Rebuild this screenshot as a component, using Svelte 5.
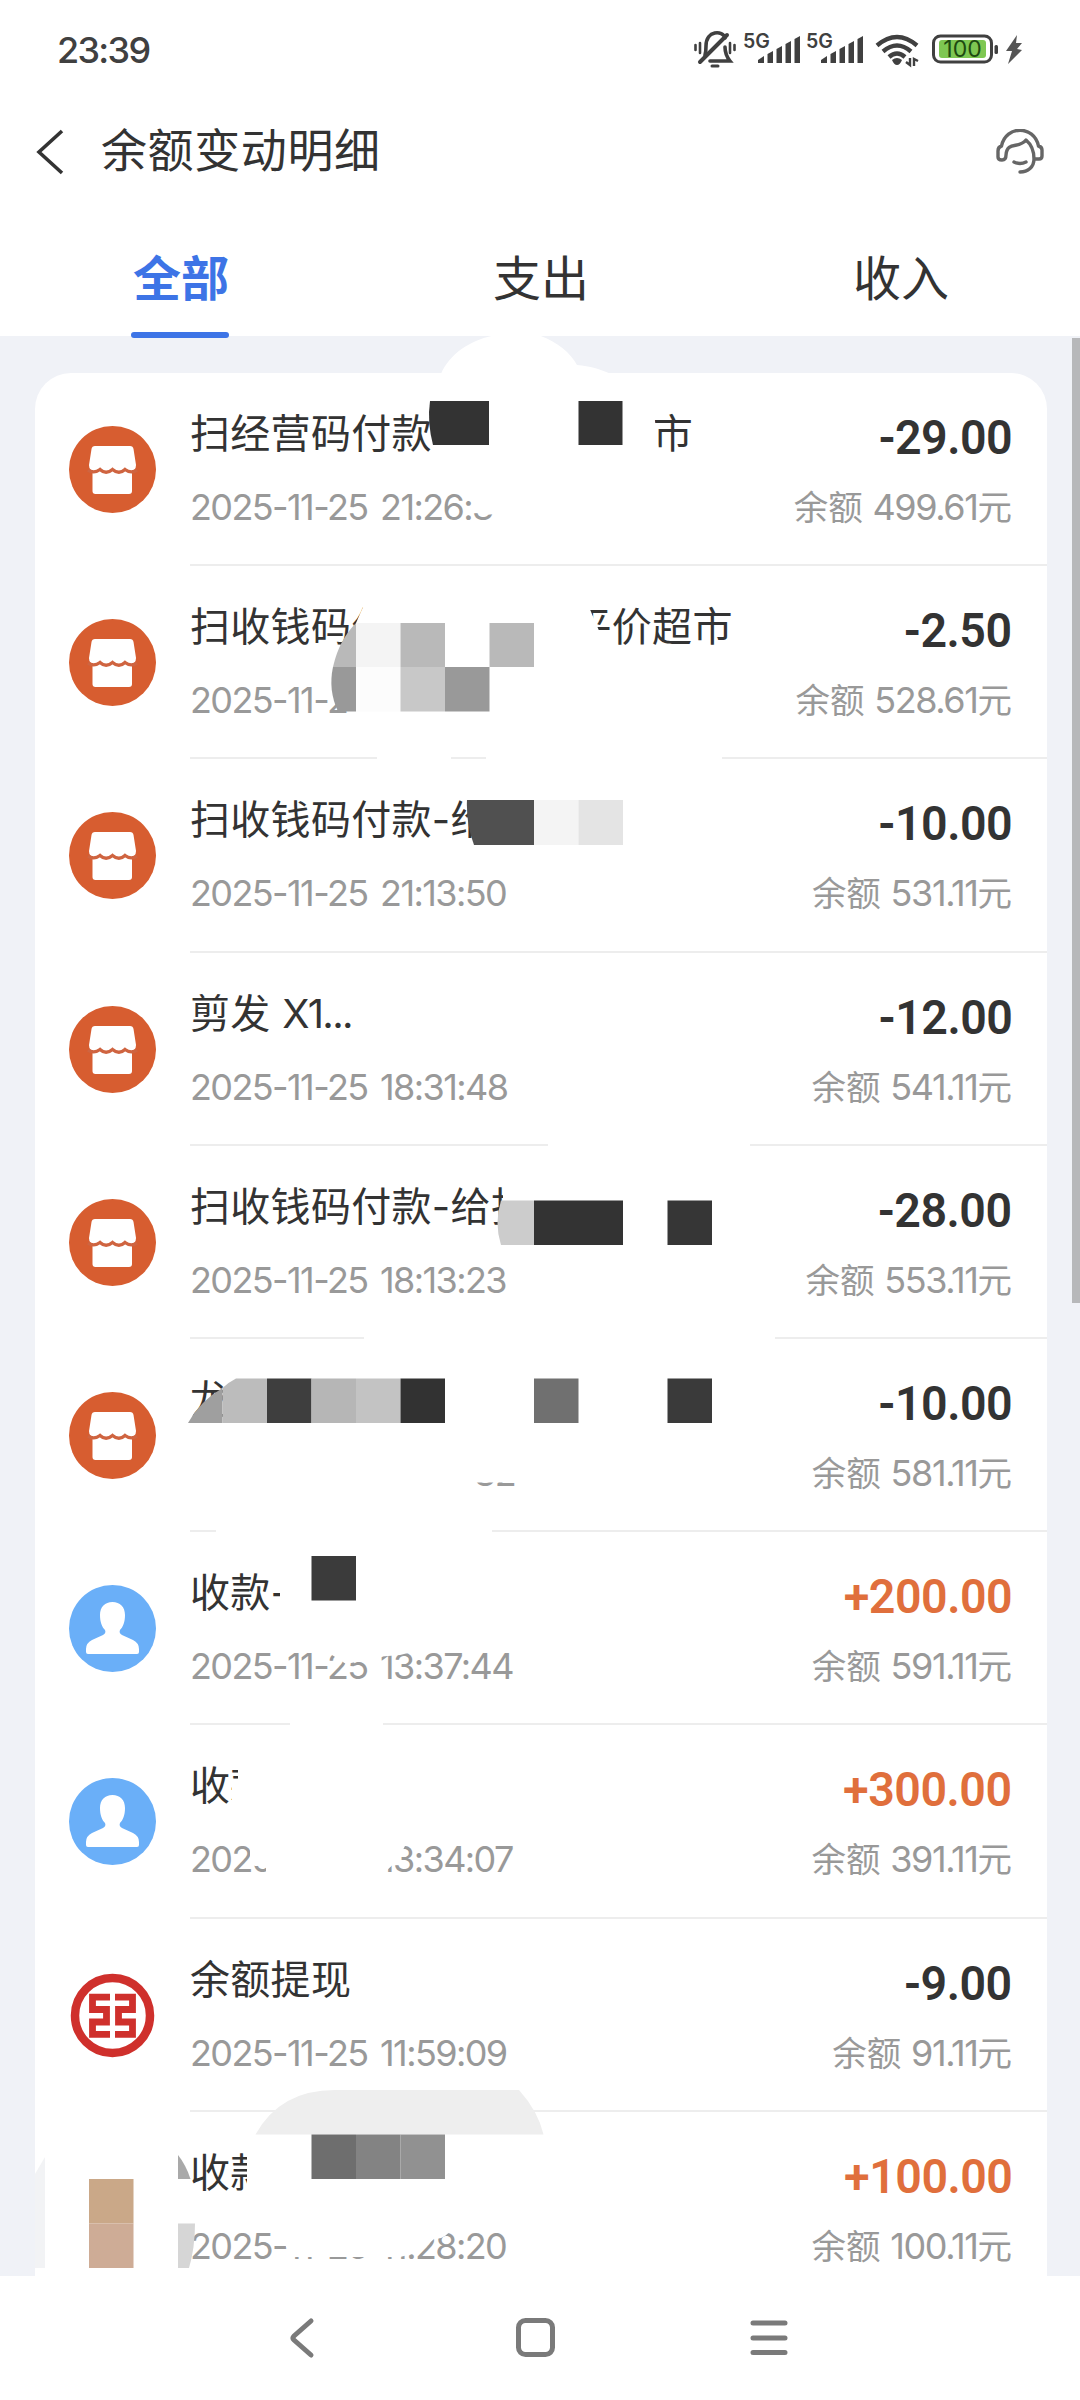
<script>
	const tabs = ['全部', '支出', '收入']
	let active = 0

	// gap: free space before the tail of a title, lead: space before a time
	const records = [
		{ icon: 'shop', title: '扫经营码付款', gap: 221, tail: '市', time: '2025-11-25 21:26:3', amount: '-29.00', balance: '499.61' },
		{ icon: 'shop', title: '扫收钱码付', gap: 180, tail: '平价超市', time: '2025-11-2', amount: '-2.50', balance: '528.61' },
		{ icon: 'shop', title: '扫收钱码付款-给', time: '2025-11-25 21:13:50', amount: '-10.00', balance: '531.11' },
		{ icon: 'shop', title: '剪发 ', count: 'X1...', time: '2025-11-25 18:31:48', amount: '-12.00', balance: '541.11' },
		{ icon: 'shop', title: '扫收钱码付款-给扫', time: '2025-11-25 18:13:23', amount: '-28.00', balance: '553.11' },
		{ icon: 'shop', title: '龙', lead: 284, time: '32', amount: '-10.00', balance: '581.11' },
		{ icon: 'user', title: '收款-', time: '2025-11-25 13:37:44', amount: '+200.00', balance: '591.11' },
		{ icon: 'user', title: '收款', time: '2025-11-25 13:34:07', amount: '+300.00', balance: '391.11' },
		{ icon: 'bank', title: '余额提现', time: '2025-11-25 11:59:09', amount: '-9.00', balance: '91.11' },
		{ icon: '', title: '收款', time: '2025-11-25 11:28:20', amount: '+100.00', balance: '100.11' }
	]

	// wiped areas
	const wipes = [
		'M441 374C450 352 475 338 497 335H538C556 341 570 352 577 365C590 366 600 369 611 374Z',
		'M489 398H579V446H489ZM623 398H652L660 460H623Z',
		'M472 488H500V512Q486 518 477 511L472 502Z',
		'M367 598L356 623H410V598Z',
		'M329 684H342V706L336 700L329 704Z',
		'M565 600H586L600 633V634H613V660H565Z',
		'M377 756H451V761H377ZM486 756H722V761H486Z',
		'M470 790H500V801H470ZM474 845H500V852H474Z',
		'M548 1142H750V1149H548Z',
		'M503 1180H540V1201H503Z',
		'M364 1335H775V1342H364Z',
		'M236 1370H240V1379H236ZM185 1423H240V1430H185ZM185 1410H196L188 1424H185Z',
		'M470 1450H515V1482.5H470Z',
		'M216 1528H492V1535H216Z',
		'M280 1560H311V1600H280Z',
		'M332 1640V1655L346 1664L356 1662L376 1657L400 1655L412 1652V1640Z',
		'M290 1721H383V1728H290Z',
		'M238 1765H280V1814H232V1781H238Z',
		'M250 1835V1864Q256 1868 266 1864V1885H385V1872Q398 1862 408 1840V1835Z',
		'M247 2140H275V2200H247Z',
		'M285 2225V2245L293 2257H400L420 2252L434 2239Q445 2240 452 2228V2225Z'
	]

	const tiles = [
		['M430 401H489V445H433Q427 422 430 401Z', '#333'],
		['M578.5 401H622.5V445H578.5Z', '#333'],
		['M356 623V667H333Q339 640 356 623Z', '#b9b9b9'],
		['M333 667H356V711.5H338Q328 690 333 667Z', '#999'],
		['M356 623H400.5V667H356Z', '#f4f4f4'],
		['M356 667H400.5V711.5H356Z', '#fcfcfc'],
		['M400.5 623H445V667H400.5ZM489.5 623H534V667H489.5Z', '#b9b9b9'],
		['M400.5 667H445V711.5H400.5Z', '#c8c8c8'],
		['M445 667H489.5V711.5H445Z', '#999'],
		['M467 800H534V845H474Q466 824 467 800Z', '#505050'],
		['M534 800H578.5V845H534Z', '#f4f4f4'],
		['M578.5 800H623V845H578.5Z', '#e4e4e4'],
		['M501 1200.5H534V1245H501Q494 1223 501 1200.5Z', '#ccc'],
		['M534 1200.5H623V1245H534Z', '#333'],
		['M667.5 1200.5H712V1245H667.5Z', '#363636'],
		['M222.5 1388V1423H188Q200 1401 222.5 1388Z', '#9f9f9f'],
		['M236 1378.5H267V1423H222.5V1388Q229 1382 236 1378.5Z', '#bcbcbc'],
		['M267 1378.5H311.5V1423H267Z', '#3e3e3e'],
		['M311.5 1378.5H356V1423H311.5Z', '#b6b6b6'],
		['M356 1378.5H400.5V1423H356Z', '#c3c3c3'],
		['M400.5 1378.5H445V1423H400.5Z', '#323232'],
		['M534 1378.5H578.5V1423H534Z', '#707070'],
		['M667.5 1378.5H712V1423H667.5Z', '#3a3a3a'],
		['M311.5 1556H356V1600.5H311.5Z', '#3b3b3b'],
		['M255.5 2134.5Q280 2090 335 2090H519Q538 2111 543.5 2134.5Z', '#eee'],
		['M311.5 2134.5H356V2179H311.5Z', '#6e6e6e'],
		['M356 2134.5H400.5V2179H356Z', '#838383'],
		['M400.5 2134.5H445V2179H400.5Z', '#919191'],
		['M178 2155Q186 2165 190.5 2179H178Z', '#a9a9a9'],
		['M178 2223.5H195Q195 2248 189 2268H178Z', '#d6d6d6'],
		['M89 2179H133.5V2223.5H89Z', '#caa888'],
		['M133.5 2223.5V2268H89V2223.5Z', '#ceac96'],
		['M45 2157L35 2174V2268H45Z', '#f2f3f5']
	]
</script>

<div class="screen">
	<div class="status">
		<span class="clock">23:39</span>
		<svg width="336" height="40" viewBox="692 28 336 40">
			<g fill="none" stroke="#404040" stroke-width="3.6" stroke-linecap="round">
				<path d="M705 55C706 52 706 49 706 46C706 30 723 30 725 38M710 61H730C726 56 725 52 725 47" />
				<path d="M700 62L727 35" stroke-width="4" />
				<path d="M695.5 45V50M700 43V53M730 43V53M734.500 45V50" stroke-width="2.6" />
				<path d="M712 66H718" stroke-width="3" />
			</g>
			<g fill="#404040">
				<text class="net" x="743" y="47.500">5G</text>
				<text class="net" x="806" y="47.500">5G</text>
				{#each [758, 821] as x}
					<path transform="translate({x} 0)" d="M0 63V60L6 56V63ZM9.500 63V54L15 51V63ZM18.500 63V49L24 46V63ZM27.500 63V44L33 41V63ZM36.500 63V39L42 36V63Z" />
				{/each}
				<path d="M892 60Q897 56 902 60Q900 65 897 65Q894 65 892 60Z" />
			</g>
			<g fill="none" stroke="#404040" stroke-width="4.400">
				<path d="M877 45.500Q897 28.500 917 45.500" />
				<path d="M883 51.500Q897 39.500 911 51.500" />
				<path d="M889 57Q897 50 905 57" />
				<path d="M910 58V65L906 62M914 66V59L918 61" stroke-width="2.400" />
			</g>
			<rect x="933.500" y="36" width="58" height="26" rx="7" fill="none" stroke="#404040" stroke-width="3" />
			<rect x="939" y="40" width="47" height="18" rx="3" fill="#7ec752" />
			<text class="level" x="962.500" y="57">100</text>
			<rect x="994.500" y="45" width="3.500" height="9" rx="1.500" fill="#404040" />
			<path d="M1017 35L1006 51H1012L1008 64L1022 50L1017 49L1022 43H1016Z" fill="#555" />
		</svg>
	</div>

	<div class="header">
		<svg width="30" height="48" viewBox="0 0 30 48" fill="none" stroke="#333" stroke-width="3.600"><path d="M27 3L4 24L27 45" /></svg>
		<h1>余额变动明细</h1>
		<svg class="service" width="48" height="46" viewBox="0 0 48 46" fill="none" stroke="#666" stroke-width="3.400" stroke-linecap="round" stroke-linejoin="round">
			<path d="M5.500 17C10 -4 38 -4 42.500 17M5.500 17Q2 18 2 22V28Q2 31 6 31C9 31 10 29 10 26C11 12 23 20 30 11C36 16 38 22 38 30H43Q46 30 46 27V21Q46 18 42.500 17M38 30C38 38 32 43 24 43M18 33Q24 36 30 33" />
		</svg>
	</div>

	<div class="tabs">
		{#each tabs as tab, i}
			<button class:active={active === i} on:click={() => (active = i)}>{tab}</button>
		{/each}
	</div>

	<div class="list">
		<div class="card">
			{#each records as r}
				<div class="row">
					<div class="icon">
						{#if r.icon === 'shop'}
							<svg width="87" height="87" viewBox="0 0 87 87">
								<circle cx="43.500" cy="43.500" r="43.500" fill="#d75d30" />
								<path d="M26 20H61Q64 20 64.500 23L67 39Q67 45 61 45H26Q20 45 20 39L22.500 23Q23 20 26 20Z" fill="#fff" />
								<path d="M23.500 42H63V65Q63 68 60 68H26.500Q23.500 68 23.500 65Z" fill="#fff" />
								<path d="M19 44Q25 48 31 43.500Q37 49 43.500 43.500Q50 49 56 43.500Q62 48 68 44" fill="none" stroke="#cf6440" stroke-width="3.400" />
							</svg>
						{:else if r.icon === 'user'}
							<svg width="87" height="87" viewBox="0 0 87 87">
								<circle cx="43.500" cy="43.500" r="43.500" fill="#6aaff8" />
								<path d="M43.500 17C51 17 56 22 56 30C56 37 54 42 51 45C50 47 51 49 53 50L64 55Q70 58 70 64V67Q70 69 68 69H19Q17 69 17 67V64Q17 58 23 55L34 50C36 49 37 47 36 45C33 42 31 37 31 30C31 22 36 17 43.500 17Z" fill="#fff" />
							</svg>
						{:else if r.icon === 'bank'}
							<svg width="87" height="87" viewBox="0 0 87 87" fill="none" stroke="#cf302c">
								<circle cx="43.500" cy="43.500" r="37.500" stroke-width="8.500" />
								<path d="M41 25.200H23.500V37.500H37.500V50H23.500V62.300H41M46 25.200H63.500V37.500H49.500V50H63.500V62.300H46" stroke-width="6.800" />
							</svg>
						{/if}
					</div>
					<div class="body">
						<div class="info">
							<div class="title">{r.title}{#if r.count}<span class="count">{r.count}</span>{/if}{#if r.tail}<span style="margin-left: {r.gap}px">{r.tail}</span>{/if}</div>
							<div class="time" style="padding-left: {r.lead || 0}px">{r.time}</div>
						</div>
						<div class="money">
							<div class="amount" class:income={r.amount[0] === '+'}>{r.amount}</div>
							<div class="balance">余额 <span>{r.balance}</span>元</div>
						</div>
					</div>
				</div>
			{/each}
		</div>
		<div class="scrollbar"></div>
		<svg class="mosaic" width="1080" height="1940" viewBox="0 336 1080 1940">
			{#each wipes as d}
				<path {d} fill="#fff" />
			{/each}
			{#each tiles as [d, color]}
				<path {d} fill={color} />
			{/each}
		</svg>
	</div>

	<div class="nav">
		<svg width="44" height="44" viewBox="0 0 44 44"><path d="M31 5L14 20Q12 22 14 24L31 39" /></svg>
		<svg width="44" height="44" viewBox="0 0 44 44"><rect x="4.500" y="4.500" width="34" height="34" rx="7" /></svg>
		<svg width="44" height="44" viewBox="0 0 44 44"><path d="M5 7H37M5 22H37M5 36.500H37" /></svg>
	</div>
</div>

<style>
	:global(body) {
		background: #fff;
	}

	.screen {
		width: 1080px;
		height: 2400px;
		overflow: hidden;
		display: flex;
		flex-direction: column;
		background: #fff;
		color: #333;
		font-family: Inter, "Noto Sans CJK SC", sans-serif;
	}

	.status {
		height: 100px;
		display: flex;
		justify-content: space-between;
		align-items: flex-start;
		padding: 28px 52px 0 57px;
		box-sizing: border-box;
	}

	.clock {
		font-size: 36px;
		line-height: 44px;
		font-weight: 500;
		letter-spacing: -1.700px;
		color: #404040;
	}

	.net {
		font-size: 19.500px;
		font-weight: 600;
	}

	.level {
		font-size: 23px;
		fill: #1d4a10;
		text-anchor: middle;
	}

	.header {
		height: 104px;
		display: flex;
		align-items: center;
		padding: 0 36px 0 35px;
	}

	h1 {
		margin: 0 0 4px 36px;
		font-size: 46px;
		font-weight: 400;
		letter-spacing: 0.600px;
		line-height: 60px;
	}

	.service {
		margin-left: auto;
	}

	.tabs {
		display: grid;
		grid-template-columns: repeat(3, 1fr);
		height: 132px;
	}

	.tabs button {
		position: relative;
		border: 0;
		background: none;
		font: inherit;
		font-size: 48px;
		line-height: 60px;
		color: #333;
		padding: 17px 0 0 2px;
	}

	.tabs .active {
		color: #3d74e6;
		font-weight: 700;
	}

	.tabs .active::after {
		content: "";
		position: absolute;
		left: 131px;
		bottom: -2px;
		width: 98px;
		height: 6px;
		border-radius: 3px;
		background: #3d74e6;
		z-index: 1;
	}

	.list {
		position: relative;
		height: 1940px;
		overflow: hidden;
		background: #f0f2f7;
		box-sizing: border-box;
		padding: 37px 33px 0 35px;
	}

	.card {
		background: #fff;
		border-radius: 36px 36px 0 0;
	}

	.row {
		display: flex;
		height: 193.200px;
	}

	.icon {
		width: 155px;
		box-sizing: border-box;
		padding: 53px 0 0 34px;
	}

	.body {
		flex: 1;
		display: flex;
		justify-content: space-between;
		border-bottom: 2px solid #ededed;
		box-sizing: border-box;
		padding-right: 35px;
		white-space: nowrap;
	}

	.title {
		margin-top: 31px;
		font-size: 40px;
		letter-spacing: 0.300px;
		line-height: 60px;
	}

	.count {
		letter-spacing: -1.700px;
	}

	.time,
	.balance {
		font-size: 36px;
		line-height: 44px;
		color: #999;
	}

	.time {
		margin-top: 21px;
		letter-spacing: -1.600px;
		word-spacing: 4px;
	}

	.money {
		text-align: right;
	}

	.amount {
		margin-top: 31px;
		font-family: Roboto, sans-serif;
		font-size: 49px;
		font-weight: 600;
		line-height: 68px;
		letter-spacing: -0.500px;
		transform: scaleX(0.95);
		transform-origin: right;
	}

	.income {
		color: #e06f3c;
	}

	.balance {
		margin-top: 13px;
		font-size: 34.500px;
	}

	.balance span {
		font-size: 36px;
		letter-spacing: -1.400px;
	}

	.scrollbar {
		position: absolute;
		top: 2px;
		right: 0;
		width: 8px;
		height: 965px;
		background: #b7b8ba;
	}

	.mosaic {
		position: absolute;
		top: 0;
		left: 0;
	}

	.nav {
		height: 124px;
		display: flex;
		justify-content: center;
		align-items: center;
		gap: 190px;
		padding: 0 8px 0 0;
	}

	.nav svg {
		fill: none;
		stroke: #7a7a7a;
		stroke-width: 5;
		stroke-linecap: round;
	}
</style>
